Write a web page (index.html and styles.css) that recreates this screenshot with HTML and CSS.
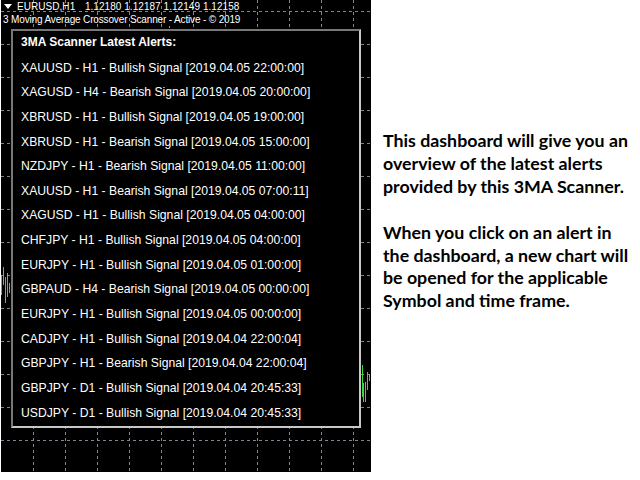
FILE: index.html
```html
<!DOCTYPE html>
<html>
<head>
<meta charset="utf-8">
<link rel="stylesheet" href="styles.css">
</head>
<body>
<div class="page">
  <div class="chart">
    <svg class="grid" width="370" height="472" viewBox="0 0 370 472">
      <g stroke="#778899" stroke-width="1" stroke-dasharray="3 3">
        <line x1="0" y1="11.5" x2="370" y2="11.5"/>
        <line x1="0" y1="44.5" x2="370" y2="44.5"/>
        <line x1="0" y1="77.5" x2="370" y2="77.5"/>
        <line x1="0" y1="110.5" x2="370" y2="110.5"/>
        <line x1="0" y1="143.5" x2="370" y2="143.5"/>
        <line x1="0" y1="176.5" x2="370" y2="176.5"/>
        <line x1="0" y1="209.5" x2="370" y2="209.5"/>
        <line x1="0" y1="242.5" x2="370" y2="242.5"/>
        <line x1="0" y1="275.5" x2="370" y2="275.5"/>
        <line x1="0" y1="308.5" x2="370" y2="308.5"/>
        <line x1="0" y1="341.5" x2="370" y2="341.5"/>
        <line x1="0" y1="374.5" x2="370" y2="374.5"/>
        <line x1="0" y1="407.5" x2="370" y2="407.5"/>
        <line x1="0" y1="440.5" x2="370" y2="440.5"/>
        <line x1="32.5" y1="0" x2="32.5" y2="472"/>
        <line x1="64.5" y1="0" x2="64.5" y2="472"/>
        <line x1="96.5" y1="0" x2="96.5" y2="472"/>
        <line x1="128.5" y1="0" x2="128.5" y2="472"/>
        <line x1="160.5" y1="0" x2="160.5" y2="472"/>
        <line x1="192.5" y1="0" x2="192.5" y2="472"/>
        <line x1="224.5" y1="0" x2="224.5" y2="472"/>
        <line x1="256.5" y1="0" x2="256.5" y2="472"/>
        <line x1="288.5" y1="0" x2="288.5" y2="472"/>
        <line x1="320.5" y1="0" x2="320.5" y2="472"/>
        <line x1="352.5" y1="0" x2="352.5" y2="472"/>
      </g>
      <g stroke="#33dd33" stroke-width="1">
        <line x1="0.5" y1="275" x2="0.5" y2="295"/>
        <line x1="2.5" y1="267" x2="2.5" y2="285"/>
        <line x1="4.5" y1="277" x2="4.5" y2="303"/>
        <line x1="6.5" y1="273" x2="6.5" y2="297"/>
        <line x1="8.5" y1="283" x2="8.5" y2="293"/>
        <line x1="361.5" y1="365" x2="361.5" y2="397"/>
        <line x1="362.5" y1="383" x2="362.5" y2="402"/>
        <line x1="364.5" y1="382" x2="364.5" y2="402"/>
        <line x1="366.5" y1="372" x2="366.5" y2="390"/>
        <line x1="368.5" y1="374" x2="368.5" y2="381"/>
        <line x1="168.5" y1="26" x2="168.5" y2="28"/>
      </g>
    </svg>
    <div class="chart-content">
      <div class="hdr hdr1"><svg class="tri" width="8" height="6" viewBox="0 0 8 6"><polygon points="0,0 8,0 4,5" fill="#fff"/></svg><span class="sym">EURUSD,H1</span>&nbsp; 1.12180 1.12187 1.12149 1.12158</div>
      <div class="hdr hdr2">3 Moving Average Crossover Scanner - Active - © 2019</div>
      <div class="panel">
        <div class="row title">3MA Scanner Latest Alerts:</div>
        <div class="row">XAUUSD - H1 - Bullish Signal [2019.04.05 22:00:00]</div>
        <div class="row">XAGUSD - H4 - Bearish Signal [2019.04.05 20:00:00]</div>
        <div class="row">XBRUSD - H1 - Bullish Signal [2019.04.05 19:00:00]</div>
        <div class="row">XBRUSD - H1 - Bearish Signal [2019.04.05 15:00:00]</div>
        <div class="row">NZDJPY - H1 - Bearish Signal [2019.04.05 11:00:00]</div>
        <div class="row">XAUUSD - H1 - Bearish Signal [2019.04.05 07:00:11]</div>
        <div class="row">XAGUSD - H1 - Bullish Signal [2019.04.05 04:00:00]</div>
        <div class="row">CHFJPY - H1 - Bullish Signal [2019.04.05 04:00:00]</div>
        <div class="row">EURJPY - H1 - Bullish Signal [2019.04.05 01:00:00]</div>
        <div class="row">GBPAUD - H4 - Bearish Signal [2019.04.05 00:00:00]</div>
        <div class="row">EURJPY - H1 - Bullish Signal [2019.04.05 00:00:00]</div>
        <div class="row">CADJPY - H1 - Bullish Signal [2019.04.04 22:00:04]</div>
        <div class="row">GBPJPY - H1 - Bearish Signal [2019.04.04 22:00:04]</div>
        <div class="row">GBPJPY - D1 - Bullish Signal [2019.04.04 20:45:33]</div>
        <div class="row">USDJPY - D1 - Bullish Signal [2019.04.04 20:45:33]</div>
      </div>
    </div>
  </div>
  <div class="desc">
    <p>This dashboard will give you an<br>overview of the latest alerts<br>provided by this 3MA Scanner.</p>
    <p>When you click on an alert in<br>the dashboard, a new chart will<br>be opened for the applicable<br>Symbol and time frame.</p>
  </div>
</div>
</body>
</html>
```

FILE: styles.css
```css
html, body {
  margin: 0;
  padding: 0;
  background: #ffffff;
}

.page {
  display: flex;
  flex-direction: row;
  align-items: flex-start;
  width: 640px;
  height: 480px;
}

.chart {
  position: relative;
  width: 370px;
  height: 472px;
  margin-left: 1px;
  background: #000000;
  flex: none;
}

.grid {
  position: absolute;
  left: 0;
  top: 0;
  display: block;
}

.chart-content {
  position: relative;
  display: flex;
  flex-direction: column;
}

.hdr {
  height: 13px;
  line-height: 13px;
  padding-left: 2px;
  font-family: "Liberation Sans", Arial, sans-serif;
  font-size: 10px;
  letter-spacing: -0.15px;
  color: #ffffff;
  white-space: nowrap;
  display: flex;
  align-items: center;
}

.hdr1 {
  letter-spacing: 0.05px;
}

.tri {
  display: block;
  margin: 0 5px 0 1px;
}

.sym {
  margin-right: 4px;
}

.panel {
  margin: 3px 0 0 10px;
  width: 346px;
  height: 395px;
  border-style: solid;
  border-width: 2px;
  border-color: #777777 #c8c8c8 #c8c8c8 #777777;
  background: #000000;
  display: flex;
  flex-direction: column;
}

.row {
  height: 24.65px;
  line-height: 24.65px;
  padding-left: 8px;
  font-family: "Liberation Sans", Arial, sans-serif;
  font-size: 12.2px;
  color: #ffffff;
  white-space: nowrap;
}

.row.title {
  font-weight: bold;
  font-size: 12px;
  line-height: 22px;
}

.desc {
  margin-left: 12px;
  padding-top: 129px;
  font-family: Lato, "Open Sans", sans-serif;
  font-weight: bold;
  font-size: 17.8px;
  line-height: 22.9px;
  color: #000000;
}

.desc p {
  margin: 0 0 22.9px 0;
  white-space: nowrap;
}
```
